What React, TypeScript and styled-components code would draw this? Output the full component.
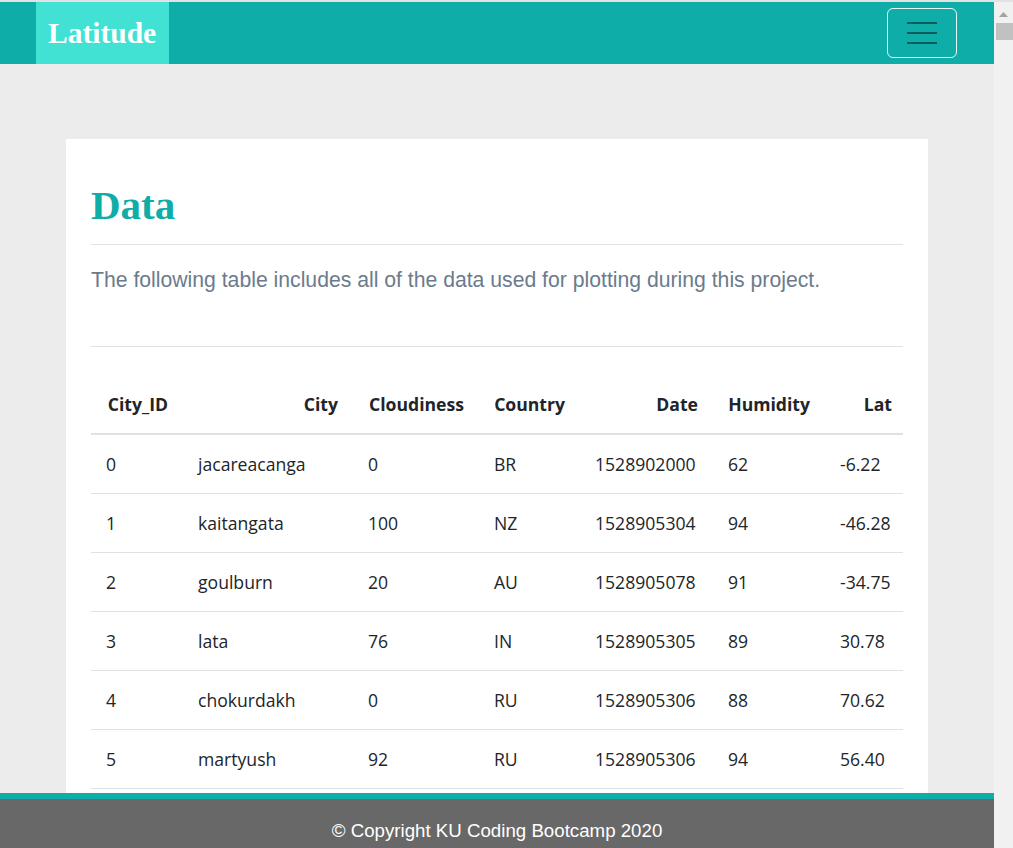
import React from 'react'
import styled, { createGlobalStyle } from 'styled-components'

const GlobalStyle = createGlobalStyle`
html, body {
  margin: 0;
  padding: 0;
  background: #ececec;
}
body {
  font-family: 'Liberation Sans', Arial, sans-serif;
  padding-right: 19px;
  padding-bottom: 80px;
  overflow-x: hidden;
}
`

interface Row {
  id: number;
  city: string;
  cloudiness: number;
  country: string;
  date: number;
  humidity: number;
  lat: string;
}

const rows: Row[] = [
  { id: 0, city: 'jacareacanga', cloudiness: 0, country: 'BR', date: 1528902000, humidity: 62, lat: '-6.22' },
  { id: 1, city: 'kaitangata', cloudiness: 100, country: 'NZ', date: 1528905304, humidity: 94, lat: '-46.28' },
  { id: 2, city: 'goulburn', cloudiness: 20, country: 'AU', date: 1528905078, humidity: 91, lat: '-34.75' },
  { id: 3, city: 'lata', cloudiness: 76, country: 'IN', date: 1528905305, humidity: 89, lat: '30.78' },
  { id: 4, city: 'chokurdakh', cloudiness: 0, country: 'RU', date: 1528905306, humidity: 88, lat: '70.62' },
  { id: 5, city: 'martyush', cloudiness: 92, country: 'RU', date: 1528905306, humidity: 94, lat: '56.40' },
  { id: 6, city: 'ushuaia', cloudiness: 75, country: 'AR', date: 1528902000, humidity: 93, lat: '-54.81' },
  { id: 7, city: 'hobart', cloudiness: 75, country: 'AU', date: 1528902000, humidity: 93, lat: '-42.88' },
  { id: 8, city: 'rikitea', cloudiness: 88, country: 'PF', date: 1528905307, humidity: 100, lat: '-23.12' },
]

interface Column {
  label: string;
  width: number;
}

const columns: Column[] = [
  { label: 'City_ID', width: 92 },
  { label: 'City', width: 170 },
  { label: 'Cloudiness', width: 126 },
  { label: 'Country', width: 101 },
  { label: 'Date', width: 133 },
  { label: 'Humidity', width: 112 },
  { label: 'Lat', width: 78 },
]

const App: React.FC = () => {
  return (
    <>
      <GlobalStyle />
      <Navbar>
        <Brand>Latitude</Brand>
        <Toggler aria-label="menu">
          <span />
          <span />
          <span />
        </Toggler>
      </Navbar>

      <Card>
        <Title>Data</Title>
        <Rule />
        <Lead>The following table includes all of the data used for plotting during this project.</Lead>
        <Rule className="before-table" />
        <TableWrap>
          <DataTable>
            <colgroup>
              {columns.map(c => <col key={c.label} style={{ width: c.width }} />)}
            </colgroup>
            <thead>
              <tr>
                {columns.map(c => <th key={c.label}>{c.label}</th>)}
              </tr>
            </thead>
            <tbody>
              {rows.map(r => (
                <tr key={r.id}>
                  <td>{r.id}</td>
                  <td>{r.city}</td>
                  <td>{r.cloudiness}</td>
                  <td>{r.country}</td>
                  <td>{r.date}</td>
                  <td>{r.humidity}</td>
                  <td>{r.lat}</td>
                </tr>
              ))}
            </tbody>
          </DataTable>
        </TableWrap>
      </Card>

      <Footer>© Copyright KU Coding Bootcamp 2020</Footer>

      <ScrollTrack>
        <ScrollArrow viewBox="0 0 19 17" width="19" height="17">
          <path d="M5 15 L9.5 10 L14 15 Z" fill="#a3a3a3" />
        </ScrollArrow>
        <ScrollThumb />
      </ScrollTrack>
    </>
  )
}

const Navbar = styled.nav`
display: flex;
justify-content: space-between;
align-items: center;
height: 62px;
padding: 0 37px 0 36px;
background: #0fada8;
border-top: 2px solid #e2e2e2;
`

const Brand = styled.a`
display: flex;
align-items: center;
height: 100%;
padding: 0 13px 0 12px;
background: #41e2d3;
color: #fff;
font-family: 'Liberation Serif', 'Times New Roman', serif;
font-weight: 700;
font-size: 29.5px;
text-decoration: none;
`

const Toggler = styled.button`
display: flex;
flex-direction: column;
justify-content: center;
align-items: center;
gap: 8px;
width: 70px;
height: 50px;
padding: 0;
background: transparent;
border: 1px solid rgba(255, 255, 255, 0.9);
border-radius: 6px;
span {
  display: block;
  width: 30px;
  height: 2px;
  background: #0d5c59;
}
`

const Card = styled.main`
width: 862px;
box-sizing: border-box;
margin: 75px auto 0;
padding: 43px 25px 40px;
background: #fff;
`

const Title = styled.h1`
margin: 0;
color: #0fada8;
font-family: 'Liberation Serif', 'Times New Roman', serif;
font-weight: 700;
font-size: 41px;
line-height: 46px;
`

const Rule = styled.hr`
margin: 16px 0 0;
border: 0;
border-top: 1px solid #e2e2e2;
&.before-table {
  margin-top: 51px;
}
`

const Lead = styled.p`
margin: 20px 0 0;
color: #6b7b8c;
font-family: 'Liberation Sans', Arial, sans-serif;
font-size: 21.2px;
line-height: 30px;
`

const TableWrap = styled.div`
margin-top: 28px;
overflow-x: auto;
`

const DataTable = styled.table`
table-layout: fixed;
width: 100%;
border-collapse: collapse;
color: #212529;
font-family: 'Open Sans', 'Noto Sans', sans-serif;
font-size: 17.6px;
line-height: 24px;
th, td {
  padding: 17px 15px;
  white-space: nowrap;
}
th {
  text-align: right;
  font-weight: 700;
  border-bottom: 2px solid #dee2e6;
}
th:last-child {
  padding-right: 11px;
}
td {
  text-align: left;
  border-bottom: 1px solid #dee2e6;
}
`

const Footer = styled.footer`
position: fixed;
left: 0;
right: 19px;
bottom: 0;
height: 43px;
padding-bottom: 6px;
display: flex;
justify-content: center;
align-items: flex-end;
border-top: 6px solid #0fada8;
background: #686868;
color: #fff;
font-family: 'Liberation Sans', Arial, sans-serif;
font-size: 18.7px;
line-height: 22px;
`

const ScrollTrack = styled.div`
position: fixed;
top: 0;
right: 0;
width: 19px;
height: 100vh;
background: #f1f1f1;
border-top: 2px solid #e2e2e2;
box-sizing: border-box;
display: flex;
flex-direction: column;
align-items: flex-end;
`

const ScrollArrow = styled.svg`
display: block;
align-self: center;
`

const ScrollThumb = styled.div`
margin-top: 4px;
width: 17px;
height: 17px;
background: #c1c1c1;
`

export default App
